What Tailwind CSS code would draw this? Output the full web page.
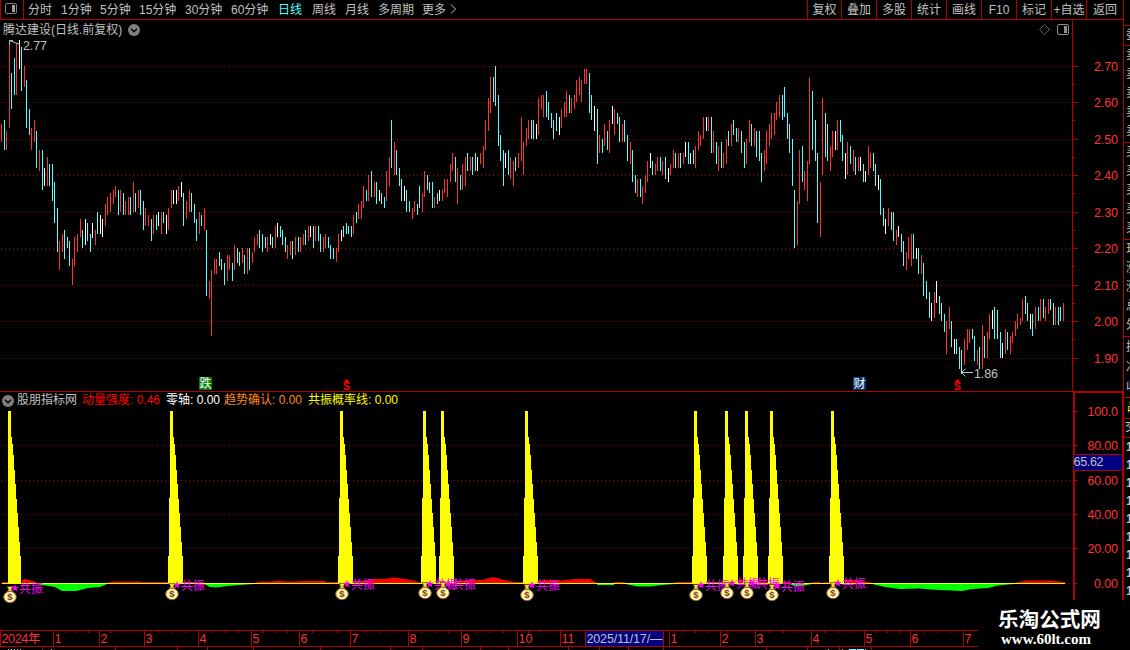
<!DOCTYPE html>
<html lang="zh-CN">
  <head>
    <meta charset="UTF-8" />
    <meta name="viewport" content="width=device-width, initial-scale=1.0" />
    <script src="https://cdn.jsdelivr.net/npm/@tailwindcss/browser@4"></script>
    <title>腾达建设 日线</title>
  </head>
  <body class="bg-black overflow-hidden">
    <div
      class="flex w-[1130px] h-[650px] overflow-hidden bg-black text-[#c0c0c0] text-[12px] leading-[19px] font-['Liberation_Sans','Noto_Sans_CJK_SC',sans-serif]"
    >
      <div class="flex flex-col w-[1123px] shrink-0">
        <!-- toolbar -->
        <header class="flex h-5 shrink-0 border-b border-l border-[#b00000] whitespace-nowrap leading-[21px]">
          <div class="w-[23px] shrink-0 border-r border-[#b00000] pl-1 pt-[3px]">
            <svg width="13" height="12" viewBox="0 0 13 12">
              <rect x="0.5" y="0.5" width="11" height="10" rx="1.5" fill="none" stroke="#808080" />
              <rect x="7" y="2" width="3" height="7" fill="#a0a0a0" />
            </svg>
          </div>
          <nav class="flex pl-1">
            <span class="w-[33px]">分时</span>
            <span class="w-[39px]">1分钟</span>
            <span class="w-[39px]">5分钟</span>
            <span class="w-[46px]">15分钟</span>
            <span class="w-[46px]">30分钟</span>
            <span class="w-[47px]">60分钟</span>
            <span class="w-[34px] text-[#54ffff]">日线</span>
            <span class="w-[33px]">周线</span>
            <span class="w-[33px]">月线</span>
            <span class="w-[44px]">多周期</span>
            <span class="w-[28px]">更多</span>
            <svg class="mt-1" width="7" height="11" viewBox="0 0 7 11">
              <path d="M1 0.5L5.5 5L1 9.5" fill="none" stroke="#c0c0c0" />
            </svg>
          </nav>
          <div class="ml-auto flex text-center">
            <span class="w-[34px] border-l border-[#b00000]">复权</span>
            <span class="w-[35px] border-l border-[#b00000]">叠加</span>
            <span class="w-[35px] border-l border-[#b00000]">多股</span>
            <span class="w-[35px] border-l border-[#b00000]">统计</span>
            <span class="w-[35px] border-l border-[#b00000]">画线</span>
            <span class="w-[35px] border-l border-[#b00000]">F10</span>
            <span class="w-[35px] border-l border-[#b00000]">标记</span>
            <span class="w-[35px] border-l border-[#b00000]">+自选</span>
            <span class="w-[37px] border-l border-[#b00000]">返回</span>
          </div>
        </header>

        <!-- price panel -->
        <section class="relative h-[371px] shrink-0">
          <svg id="price" class="block" width="1123" height="371" viewBox="0 20 1123 371">
            <g id="priceGrid" stroke="#b00000" stroke-dasharray="1 3"></g>
            <path d="M1072.5 20V391" stroke="#b00000" />
            <g id="priceTicks" stroke="#b00000"></g>
            <g id="priceLabels" fill="#ff3232" font-size="12.5" text-anchor="end"></g>
            <g id="bars" shape-rendering="crispEdges"></g>
            <g fill="none" stroke="#c0c0c0">
              <path d="M9.5 40.5L20 44.5M9.5 45V40.5H13" />
              <path d="M961.5 372.5H973M965.5 368.5L961.5 372.5L965.5 376.5" />
            </g>
            <g fill="#c0c0c0" font-size="12.5">
              <text x="23" y="50" textLength="24">2.77</text>
              <text x="974" y="378" textLength="24">1.86</text>
            </g>
            <rect x="199" y="377" width="13" height="13" fill="#008000" />
            <rect x="853" y="377" width="13" height="13" fill="#003a70" />
            <g fill="#fff" font-size="12">
              <text x="199.5" y="388">跌</text>
              <text x="853.5" y="388">财</text>
            </g>
            <g fill="#ff0000" font-size="10.5" font-weight="bold" text-anchor="middle">
              <path d="M343.5 382L346.5 379L349.5 382ZM954.5 382L957.5 379L960.5 382Z" />
              <text x="346.5" y="390">S</text>
              <text x="957.5" y="390">S</text>
            </g>
            <path d="M1044.5 24.5L1049.5 29.5L1044.5 34.5L1039.5 29.5Z" fill="none" stroke="#606060" />
            <rect x="1057.5" y="24.5" width="11" height="10" rx="1.5" fill="none" stroke="#909090" />
            <rect x="1064" y="26" width="3" height="7" fill="#909090" />
          </svg>
          <div class="absolute left-[3px] top-0 flex items-center whitespace-nowrap">
            <span class="w-[125px] pt-px">腾达建设(日线.前复权)</span>
            <svg width="12" height="12" viewBox="0 0 12 12">
              <circle cx="6" cy="6" r="6" fill="#808080" />
              <path d="M3 4.8L6 7.8L9 4.8" fill="none" stroke="#000" stroke-width="1.4" />
            </svg>
          </div>
        </section>

        <!-- indicator panel -->
        <section class="relative h-[239px] shrink-0">
          <svg class="block" width="1123" height="239" viewBox="0 391 1123 239">
            <g id="indGrid" stroke="#b00000" stroke-dasharray="1 3"></g>
            <path d="M0 391.5H1073" stroke="#b00000" />
            <path d="M1074 600V392H1123" fill="none" stroke="#b00000" stroke-width="2" />
            <g id="indTicks" stroke="#b00000"></g>
            <g id="indLabels" fill="#ff3232" font-size="12.5" text-anchor="end"></g>
            <path
              d="M2 583V582H8V583ZM22 583V580L25 579L33 581L38 583ZM107 583L112 581.5H140V582H188L205 583ZM254 583L260 581.5H272L278 580.5L285 581.5H294L303 581H325L326 582H338L360 581L375 579H384L394 577.5L405 579L415 581L422 583ZM437 583V581H455L470 580L482 580L493 577L504 580L515 582L530 582L545 580L562 580.5L575 579H590L597 583ZM614 583V582H625V583ZM675 583V582L690 582L694 581V583ZM708 583V582H725L735 581L790 582V583ZM810 583L814 582H820V583ZM820 583L828 582V583ZM845 583V581L850 580L868 582L873 583ZM1014 583L1027 580.5H1050L1064 582L1066 583Z"
              fill="#ff0000"
            />
            <path
              d="M36 584L55 587L62 591H76L88 588L100 587L107 584ZM204 584L210 587L216 587.5L228 586L240 585L254 584ZM597 584V585H614V584ZM625 584L638 586.5H650L662 585L675 584ZM790 584L794 586L802 586L812 584ZM872 584L885 587L900 589L920 588.5L930 589.5L962 591L972 589L988 588L998 585.5L1014 584Z"
              fill="#00ff00"
            />
            <path d="M2 583.5H1065" stroke="#ffff00" />
            <g id="spikes" fill="#ffff00" shape-rendering="crispEdges"></g>
            <g id="signals"></g>
            <rect x="1073" y="454" width="50" height="17" fill="#b00000" />
            <rect x="1074" y="455" width="48" height="15" fill="#000080" />
            <path d="M1123 391V600" stroke="#b00000" stroke-width="2" />
            <text x="1073.5" y="466" textLength="30" font-size="12.5" fill="#c0c0c0">65.62</text>
          </svg>
          <div class="absolute left-[2px] top-0 flex items-center whitespace-nowrap">
            <svg class="mr-[3px]" width="12" height="12" viewBox="0 0 12 12">
              <circle cx="6" cy="6" r="6" fill="#808080" />
              <path d="M3 4.8L6 7.8L9 4.8" fill="none" stroke="#000" stroke-width="1.4" />
            </svg>
            <span class="w-[65px]">股朋指标网</span>
            <span class="w-[84px] text-[#ff0000]">动量强度: 0.46</span>
            <span class="w-[58px] text-white">零轴: 0.00</span>
            <span class="w-[84px] text-[#ff8c1a]">趋势确认: 0.00</span>
            <span class="text-[#ffff00]">共振概率线: 0.00</span>
          </div>
        </section>

        <!-- time axis -->
        <footer class="h-5 shrink-0">
          <svg class="block" width="1123" height="20" viewBox="0 630 1123 20">
            <path d="M0 630.5H978M0 646.5H978M0.5 630V647" stroke="#b00000" />
            <g id="axisTicks" stroke="#b00000"></g>
            <rect x="585" y="631" width="79" height="15" fill="#000080" />
            <path d="M585.5 631V646M663.5 631V646" stroke="#b00000" />
            <text x="586.5" y="642.5" textLength="76" font-size="12.5" fill="#c0c0c0">2025/11/17/—</text>
            <g id="axisLabels" fill="#ff3232" font-size="12.5"></g>
            <path d="M8 649.5H21M51 649.5H53M828 649.5H829M842 649.5H843" stroke="#c0c0c0" stroke-dasharray="1 2" />
            <path d="M849 649.5H866" stroke="#54ffff" stroke-dasharray="7 1" />
          </svg>
        </footer>
      </div>

      <!-- quote column, cut off by the window edge -->
      <aside class="w-[7px] shrink-0 overflow-hidden border-l border-[#b00000] flex flex-col whitespace-nowrap">
        <div class="h-[25px] shrink-0"></div>
        <div class="h-5 shrink-0 border-t border-[#b00000] pl-[2px]">委比</div>
        <div class="h-[97px] shrink-0 border-t border-[#b00000] pl-[2px]">
          卖五<br />卖四<br />卖三<br />卖二<br />卖一
        </div>
        <div class="h-[97px] shrink-0 border-t border-[#b00000] pl-[2px]">
          买一<br />买二<br />买三<br />买四<br />买五
        </div>
        <div class="h-[97px] shrink-0 border-t border-[#b00000] pl-[2px]">
          现价<br />涨跌<br />涨幅<br />总量<br />外盘
        </div>
        <div class="h-[61px] shrink-0 border-t border-[#b00000] pl-[2px] leading-[20px]">
          换手<br />净资<br />收益
        </div>
        <div class="h-[21px] shrink-0 border-t border-[#b00000] pl-[3px] text-[#ffff00]">品种</div>
        <div class="h-[19px] shrink-0 border-t border-[#b00000] pl-[1px] leading-[17px]">交易</div>
        <div class="grow border-t border-[#b00000] pl-[2px] leading-[18px] font-bold">
          14<br />14<br />14<br />14<br />14<br />14<br />14<br />14<br />14
        </div>
      </aside>
    </div>

    <!-- watermark -->
    <div
      class="absolute left-[978px] top-[600px] w-[152px] h-[50px] bg-black pl-[20px] text-white font-bold whitespace-nowrap"
    >
      <div class="text-[20.6px] leading-[36px] h-[30px] font-['Noto_Sans_CJK_SC',sans-serif]">乐淘公式网</div>
      <div class="text-[15px] leading-[19px] pl-[3px] font-['Liberation_Serif',serif]">www.60lt.com</div>
    </div>

    <script>
      // x, high y, low y, colour (r up, c down, w flat)
      const bars = `
1 124 142 r,4 120 150 c,6 131 150 r,9 40 128 r,11 73 109 c,14 58 95 c,16 43 95 r,19 40 69 w,21 47 91 c,24 66 87 r,
26 80 128 c,29 109 135 c,31 128 150 r,34 120 142 r,36 131 168 c,39 150 171 r,42 150 190 c,44 168 186 w,47 157 186 r,49 164 186 c,
52 164 201 c,54 182 223 c,57 208 252 c,59 241 270 r,62 234 252 r,64 230 259 c,67 237 248 c,69 241 266 c,72 259 285 r,74 237 266 r,
77 234 252 r,80 219 237 r,82 230 248 c,85 219 245 w,87 223 241 c,90 234 252 c,92 223 238 w,95 230 245 r,97 212 234 c,100 215 234 w,
102 219 237 w,105 204 226 r,107 197 215 r,110 193 212 r,113 190 204 r,115 186 197 r,118 190 215 c,120 190 212 r,123 193 215 c,125 201 215 r,
128 197 215 r,130 197 215 c,133 182 212 r,135 193 212 c,138 190 208 r,140 190 215 c,143 201 230 c,145 208 226 r,148 215 226 r,151 219 241 c,
153 215 234 r,156 215 230 c,158 212 226 w,161 212 234 r,163 212 223 c,166 215 234 w,168 208 230 r,171 190 208 r,173 190 204 w,176 190 204 w,
178 186 201 r,181 182 197 w,183 193 226 c,186 201 219 r,189 190 212 r,191 193 212 c,194 204 223 c,196 219 241 c,199 212 234 r,201 215 226 c,
204 208 230 r,206 230 296 c,209 281 299 r,211 270 336 r,214 259 274 r,216 259 274 r,219 252 266 c,221 259 270 c,224 263 285 c,227 255 281 r,
229 255 270 r,232 263 281 c,234 245 270 r,237 248 263 c,239 252 266 c,242 248 263 r,244 255 274 c,247 248 274 r,249 248 270 c,252 252 263 r,
254 237 252 r,257 234 245 r,259 230 248 c,262 234 252 c,265 237 248 c,267 237 252 r,270 234 245 w,272 237 248 c,275 226 248 r,277 223 237 w,
280 226 237 c,282 230 245 c,285 237 252 c,287 245 259 r,290 241 255 r,292 241 259 c,295 237 255 r,298 237 252 c,300 237 252 r,303 234 245 r,
305 230 245 c,308 226 241 r,310 226 237 w,313 226 248 c,315 226 241 r,318 226 241 c,320 234 252 c,323 237 252 r,325 234 248 r,328 237 248 c,
330 245 259 c,333 248 259 c,336 248 262 r,338 234 252 r,341 230 241 w,343 226 237 c,346 223 234 c,348 226 234 c,351 226 237 c,353 215 234 r,
356 212 223 c,358 204 219 r,361 201 219 r,363 186 208 r,366 190 201 c,368 175 201 r,371 171 197 c,374 182 197 r,376 182 204 c,379 190 201 w,
381 193 204 c,384 197 208 c,386 171 201 r,389 157 186 r,391 120 168 c,394 142 175 r,396 150 175 c,399 168 186 c,401 179 201 c,404 186 201 w,
406 190 212 c,409 201 212 c,412 208 219 r,414 201 212 r,417 204 215 c,419 186 208 c,422 193 212 r,424 171 197 r,427 175 190 c,429 182 193 c,
432 182 208 c,434 197 208 r,437 193 204 c,439 190 201 w,442 190 201 r,444 179 193 r,447 179 197 r,450 164 182 r,452 153 171 r,455 157 182 c,
457 168 204 r,460 175 190 c,462 164 190 r,465 157 186 r,467 153 171 c,470 157 171 r,472 157 175 c,475 153 171 c,477 157 171 w,480 153 164 r,
483 146 168 r,485 120 150 r,488 98 131 r,490 77 113 r,493 77 102 c,495 66 106 c,498 95 146 c,500 135 161 c,503 150 186 c,505 153 168 w,
508 150 175 c,510 157 179 r,513 161 186 r,515 157 171 c,518 153 168 r,521 117 161 r,523 142 175 r,526 128 146 r,528 120 139 r,531 120 139 c,
533 120 139 c,536 124 139 w,538 98 135 r,541 95 109 r,543 95 117 r,546 91 117 c,548 102 120 c,551 113 128 c,553 120 139 c,556 113 131 c,
559 117 135 w,561 109 128 r,564 102 117 r,566 91 117 r,569 95 113 c,571 98 113 r,574 95 109 r,576 80 102 r,579 77 95 r,581 80 102 r,
584 69 84 r,586 69 84 r,589 73 113 c,591 95 120 c,594 106 131 w,597 109 164 c,599 135 153 r,602 139 153 c,604 124 146 r,607 131 150 c,
609 120 153 r,612 106 124 w,614 109 135 r,617 113 124 c,619 117 142 c,622 124 142 r,624 120 142 c,627 135 161 c,630 142 164 r,632 150 182 c,
635 175 193 c,637 179 197 r,640 179 197 c,642 186 204 r,645 175 193 r,647 161 182 r,650 153 168 w,652 161 175 c,655 164 175 r,657 157 171 r,
660 157 171 c,662 161 175 r,665 157 179 c,668 168 182 w,670 164 175 r,673 150 168 r,675 153 168 c,678 153 168 r,680 153 168 c,683 153 164 r,
685 142 157 w,688 142 164 c,690 153 164 w,693 150 164 c,695 146 168 r,698 131 150 r,700 135 146 r,703 117 139 r,706 117 131 w,708 117 131 r,
711 117 153 c,713 131 153 r,716 142 164 c,718 146 171 r,721 142 168 c,723 153 168 r,726 139 164 r,728 131 146 c,731 124 146 r,733 120 135 c,
736 128 142 c,738 128 142 r,741 131 153 c,744 142 168 c,746 139 164 r,749 120 142 r,751 124 146 c,754 128 146 r,756 131 157 c,759 131 161 c,
761 153 182 c,764 150 171 r,766 131 164 r,769 124 146 r,771 113 139 r,774 113 135 r,776 102 120 r,779 95 117 r,782 95 120 c,784 87 117 c,
787 113 139 c,789 124 153 c,792 139 186 c,794 190 248 c,797 201 245 r,799 150 204 r,802 146 182 c,804 171 190 r,807 161 201 r,809 77 164 r,
812 91 150 c,815 120 161 c,817 153 223 c,820 182 237 r,822 98 175 r,825 113 157 c,827 124 161 c,830 146 171 r,832 131 157 r,835 131 150 w,
837 120 150 r,840 120 142 c,842 135 161 c,845 153 179 w,847 142 175 r,850 146 164 c,853 150 171 r,855 157 175 c,858 157 171 r,860 157 171 w,
863 164 182 c,865 171 182 w,868 146 175 r,870 153 168 r,873 153 171 c,875 164 186 c,878 175 190 w,880 179 215 c,883 208 226 c,885 219 234 w,
888 208 226 r,891 212 230 c,893 212 241 c,896 230 245 r,898 226 237 w,901 234 252 c,903 241 266 c,906 252 270 r,908 237 259 r,911 234 266 r,
913 234 259 c,916 248 259 w,918 248 274 c,921 255 274 r,923 263 296 c,926 281 299 c,929 292 318 c,931 303 321 w,934 292 318 r,936 281 303 w,
939 296 314 c,941 303 321 c,944 314 332 c,946 321 354 r,949 307 329 r,951 321 347 c,954 339 354 w,956 339 354 c,959 347 369 c,961 350 374 c,
964 339 365 r,967 329 350 r,969 329 343 r,972 329 339 c,974 336 361 c,977 350 365 r,979 347 369 c,982 325 369 r,984 336 358 c,987 332 358 r,
989 314 339 r,992 310 329 w,994 307 339 c,997 310 339 c,1000 332 358 c,1002 343 358 w,1005 329 354 r,1007 332 350 c,1010 336 354 r,1012 332 343 r,
1015 321 336 r,1017 314 329 r,1020 318 325 r,1022 299 321 r,1025 296 314 c,1027 303 321 c,1030 314 329 w,1032 314 336 c,1035 307 329 r,1038 307 321 c,
1040 299 321 r,1043 299 318 c,1045 307 321 r,1048 299 314 r,1050 299 310 c,1053 303 325 c,1055 307 325 r,1058 307 325 c,1060 307 321 c,1063 303 321 r`;
      const colours = { r: "#ff3232", c: "#54ffff", w: "#ffffff" };
      const fill = (id, html) => (document.getElementById(id).innerHTML = html);

      fill(
        "bars",
        bars
          .trim()
          .split(/,\s*/)
          .map((b) => {
            const [x, y1, y2, c] = b.split(" ");
            return `<rect x="${x}" y="${y1}" width="1" height="${y2 - y1}" fill="${colours[c]}"/>`;
          })
          .join("")
      );

      // horizontal grid and scale of one panel
      function drawScale(name, rows) {
        let grid = "";
        let ticks = "";
        let labels = "";
        rows.forEach(([y, label], i) => {
          if (label !== "100.0") grid += `<path d="M1 ${y + 0.5}H1070"/>`;
          ticks += `<path d="M1073 ${y + 0.5}h5"/>`;
          if (i < rows.length - 1) {
            const mid = Math.floor((y + rows[i + 1][0]) / 2) + 0.5;
            ticks += `<path d="M1073 ${mid}h2.5"/>`;
          }
          const w = label.length === 5 ? 30.5 : 24;
          labels += `<text x="1118" y="${y + 5}" textLength="${w}">${label}</text>`;
        });
        fill(name + "Grid", grid);
        fill(name + "Ticks", ticks);
        fill(name + "Labels", labels);
      }
      drawScale("price", [
        [66, "2.70"], [102, "2.60"], [139, "2.50"], [175, "2.40"], [212, "2.30"],
        [248, "2.20"], [285, "2.10"], [321, "2.00"], [358, "1.90"],
      ]);
      drawScale("ind", [
        [411, "100.0"], [445, "80.00"], [480, "60.00"], [514, "40.00"], [548, "20.00"], [583, "0.00"],
      ]);

      // resonance spikes: left edge, bag centre x / y, label y
      const signals = [
        [8, 10, 597, 593], [170, 172, 594, 590], [340, 342, 594, 589], [423, 425, 593, 589],
        [441, 443, 593, 589], [525, 527, 595, 590], [694, 696, 595, 590], [725, 727, 593, 588],
        [745, 747, 593, 588], [770, 772, 595, 591], [831, 833, 593, 588],
      ];
      fill(
        "spikes",
        signals
          .map(([x]) => {
            const l = x === 8 ? 0 : 2;
            return `<path d="M${x} 411h3v22l2 15l7.5 108l1 28h${-13.5 - l}v-28h${l / 2}v-58h${l / 2}z"/>`;
          })
          .join("")
      );
      fill(
        "signals",
        signals
          .map(
            ([x, cx, cy, ly]) => `
            <g transform="translate(${cx} ${cy})">
              <path d="M-3 -10.5H3L1.5 -7.5L3 -5H-3L-1.5 -7.5Z" fill="#f0d840" stroke="#5a3010" stroke-width="0.6"/>
              <ellipse cx="0" cy="0" rx="6.3" ry="5.7" fill="#fff4a8" stroke="#8a6030"/>
              <text x="0" y="3.4" font-size="9.5" font-weight="bold" text-anchor="middle" fill="#7a3a20">$</text>
            </g>
            <path transform="translate(${cx + 5} ${ly - 5})" d="M0 -4L1 -1.2H4L1.6 .6L2.5 3.6L0 1.8L-2.5 3.6L-1.6 .6L-4 -1.2H-1Z" fill="#ff00ff"/>
            <text x="${cx + 9}" y="${ly}" font-size="12" fill="#ff00ff">共振</text>`
          )
          .join("")
      );

      const months = [
        [0, "2024年"], [53, "1"], [99, "2"], [144, "3"], [198, "4"], [251, "5"], [299, "6"], [350, "7"],
        [408, "8"], [461, "9"], [517, "10"], [560, "11"], [669, "1"], [720, "2"], [755, "3"],
        [811, "4"], [864, "5"], [910, "6"], [963, "7"],
      ];
      let ticks = "";
      months.forEach(([x, label], i) => {
        ticks += `<path d="M${x + 0.5} 630V647"/>`;
        const next = months[i + 1];
        if (!next || label === "11" || i === 0) return;
        for (let q = 1; q < 4; q++) {
          ticks += `<path d="M${Math.round(x + ((next[0] - x) * q) / 4) + 0.5} 631v2"/>`;
        }
      });
      for (const x of [42, 115, 177, 207, 253, 320, 390, 422, 480, 508, 568, 599, 628, 663, 766, 807, 839, 871]) {
        ticks += `<path d="M${x + 0.5} 647v3"/>`;
      }
      fill("axisTicks", ticks);
      fill(
        "axisLabels",
        months
          .map(([x, label]) => `<text x="${x + 1.5}" y="643"${i18nWidth(label)}>${label}</text>`)
          .join("")
      );

      // the year label is set a little tighter than the months
      function i18nWidth(label) {
        return label.endsWith("年") ? ' textLength="39"' : "";
      }
    </script>
  </body>
</html>
